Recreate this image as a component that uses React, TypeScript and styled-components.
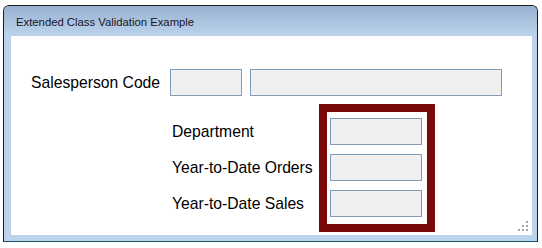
import { createGlobalStyle, styled } from "styled-components";

const GlobalStyle = createGlobalStyle`
  html, body {
    margin: 0;
    padding: 0;
    background: #ffffff;
  }
  body {
    font-family: "Liberation Sans", Arial, sans-serif;
  }
`

const Window = styled.div`
  box-sizing: border-box;
  margin: 5px 0 0 3px;
  width: 535px;
  height: 237px;
  border: 1px solid #1c1c1c;
  border-bottom-color: #1e5566;
  border-radius: 6px 6px 0 0;
  background: #bcd3ec;
  display: flex;
  flex-direction: column;
  overflow: hidden;
`

const TitleBar = styled.div`
  height: 30px;
  flex: none;
  display: flex;
  align-items: center;
  padding: 2px 0 0 12px;
  box-sizing: border-box;
  background: linear-gradient(#97b2d1, #bcd3ec);
  font-family: "Liberation Sans", Arial, sans-serif;
  font-size: 11.3px;
  color: #1a1424;
`

const Client = styled.div`
  position: relative;
  flex: 1;
  margin: 0 5px 6px 7px;
  background: #ffffff;
  padding: 33px 0 0 20px;
  box-sizing: border-box;
`

const Row = styled.div`
  display: flex;
  align-items: center;
`

const Label = styled.div<{ $width: number }>`
  width: ${(p) => p.$width}px;
  height: 27px;
  display: flex;
  align-items: center;
  font-size: 15.7px;
  color: #000000;
  white-space: nowrap;
`

const Field = styled.div<{ $width: number }>`
  box-sizing: border-box;
  width: ${(p) => p.$width}px;
  height: 27px;
  background: #f0f0f0;
  border: 1px solid #7f9db9;
`

const Gap = styled.div`
  width: 8px;
`

const Lower = styled.div`
  display: flex;
  margin: 8px 0 0 141px;
`

const LabelColumn = styled.div`
  width: 147px;
  display: flex;
  flex-direction: column;
  gap: 9px;
  padding-top: 14px;
`

const Highlight = styled.div`
  box-sizing: border-box;
  width: 116px;
  height: 128px;
  border: 8px solid #7a0a0a;
  padding: 6px 5px 7px 3px;
  display: flex;
  flex-direction: column;
  gap: 9px;
`

const Grip = styled.svg`
  position: absolute;
  right: 2px;
  bottom: 2px;
`

export default function App() {
  return (
    <>
      <GlobalStyle />
      <Window>
        <TitleBar>Extended Class Validation Example</TitleBar>
        <Client>
          <Row>
            <Label $width={139}>Salesperson Code</Label>
            <Field $width={72} />
            <Gap />
            <Field $width={252} />
          </Row>
          <Lower>
            <LabelColumn>
              <Label $width={147}>Department</Label>
              <Label $width={147}>Year-to-Date Orders</Label>
              <Label $width={147}>Year-to-Date Sales</Label>
            </LabelColumn>
            <Highlight>
              <Field $width={92} />
              <Field $width={92} />
              <Field $width={92} />
            </Highlight>
          </Lower>
          <Grip width="12" height="12" viewBox="0 0 12 12">
            <g fill="#a6a6a6">
              <rect x="8" y="0" width="2" height="2" />
              <rect x="4" y="4" width="2" height="2" />
              <rect x="8" y="4" width="2" height="2" />
              <rect x="0" y="8" width="2" height="2" />
              <rect x="4" y="8" width="2" height="2" />
              <rect x="8" y="8" width="2" height="2" />
            </g>
          </Grip>
        </Client>
      </Window>
    </>
  )
}
